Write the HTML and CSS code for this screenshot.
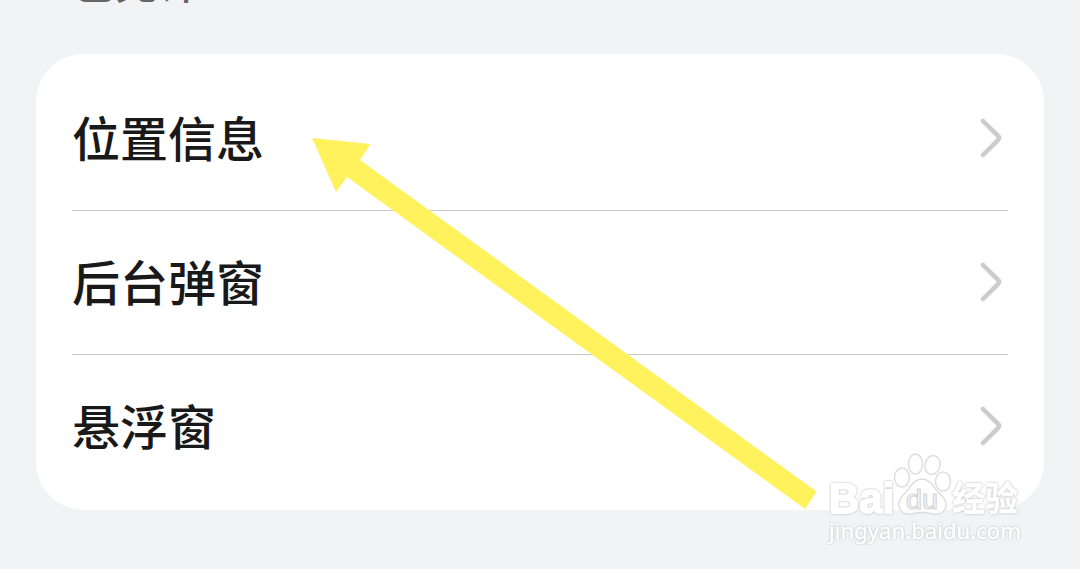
FILE: index.html
```html
<!DOCTYPE html>
<html lang="zh-CN">
<head>
    <meta charset="UTF-8">
    <meta name="viewport" content="width=device-width, initial-scale=1.0">
    <title>权限</title>
    <link rel="stylesheet" href="styles.css">
</head>
<body>

    <h2 class="section-title">已允许</h2>

    <div class="card">
        <div class="row">
            <span>位置信息</span>
            <svg class="chevron" width="24" height="40" viewBox="0 0 24 40"><path d="M3 3L18 17.800Q20 20 18 22.200L3 37"/></svg>
        </div>
        <div class="row">
            <span>后台弹窗</span>
            <svg class="chevron" width="24" height="40" viewBox="0 0 24 40"><path d="M3 3L18 17.800Q20 20 18 22.200L3 37"/></svg>
        </div>
        <div class="row">
            <span>悬浮窗</span>
            <svg class="chevron" width="24" height="40" viewBox="0 0 24 40"><path d="M3 3L18 17.800Q20 20 18 22.200L3 37"/></svg>
        </div>
    </div>

    <svg class="arrow" width="506" height="372" viewBox="0 0 506 372">
        <path d="M0 0L58.500 6L48 22L504.500 353.500L493 371L35 39L24 54Z"/>
    </svg>

    <svg class="watermark" width="210" height="100" viewBox="0 0 210 100">
        <g class="paw">
            <ellipse cx="82" cy="32.500" rx="7.500" ry="9.500"/>
            <ellipse cx="95.500" cy="19" rx="7" ry="10"/>
            <ellipse cx="112.500" cy="20" rx="7.500" ry="9.500" transform="rotate(12 112.500 20)"/>
            <ellipse cx="123" cy="36.500" rx="7.500" ry="9.500"/>
            <path d="M102 34C94 34 91 41 87 46C82 51 78 55 79 61C80 68 86 70 92 69C99 67 105 67 112 69C119 70 125 68 126 61C127 55 122 51 117 46C113 41 110 34 102 34Z"/>
        </g>
        <g class="logo">
            <text x="9" y="67.500" font-size="42" textLength="65" lengthAdjust="spacingAndGlyphs">Bai</text>
            <text class="du" x="86" y="64" font-size="27" textLength="32" lengthAdjust="spacingAndGlyphs">du</text>
            <text class="cn" x="132" y="66" font-size="34" textLength="66" lengthAdjust="spacingAndGlyphs">经验</text>
        </g>
        <text class="url" x="9" y="94" font-size="22" textLength="192" lengthAdjust="spacingAndGlyphs">jingyan.baidu.com</text>
    </svg>

</body>
</html>
```
FILE: styles.css
```css
* {
    box-sizing: border-box;
}

body {
    position: relative;
    margin: 0;
    height: 569px;
    overflow: hidden;
    background-color: #f1f3f5;
    color: #191919;
    font-family: "Noto Sans CJK SC", sans-serif;
}

.section-title {
    height: 54px;
    margin: -49px 0 49px;
    padding-left: 73px;
    font-size: 42px;
    font-weight: 500;
    line-height: 60px;
    letter-spacing: 0.5px;
    color: #666;
}

.card {
    margin: 0 36px;
    padding: 12px 36px;
    height: 456px;
    background-color: #fff;
    border-radius: 48px;
}

.row {
    display: flex;
    justify-content: space-between;
    align-items: center;
    height: 144px;
    padding-right: 4px;
    font-size: 48px;
    font-weight: 500;
    line-height: 72px;
}

.row span {
    padding-bottom: 5px;
}

.row + .row {
    border-top: 1px solid #c8c9ca;
}

.row + .row .chevron {
    margin-top: -1px;
}

.chevron path {
    fill: none;
    stroke: #ccc;
    stroke-width: 4.5;
    stroke-linecap: round;
}

/* pointer drawn over the list */
.arrow {
    position: absolute;
    left: 312px;
    top: 138px;
    fill: #fff25c;
}

.watermark {
    position: absolute;
    left: 820px;
    top: 445px;
}

.paw {
    fill: rgba(255, 255, 255, 0.8);
    stroke: #dedede;
    stroke-width: 1.5;
}

.logo text {
    font-family: "Liberation Sans", sans-serif;
    font-weight: bold;
    fill: #fff;
    stroke: #fff;
    stroke-width: 2;
    filter: drop-shadow(0 0 1px #b5b5b5);
}

.logo .du {
    font-weight: normal;
    stroke: #d5d5d5;
    stroke-width: 1.2;
    filter: none;
}

.logo .cn {
    font-family: "Noto Sans CJK SC", sans-serif;
    stroke-width: 0.5;
}

.url {
    font-family: "Noto Sans", sans-serif;
    font-weight: 400;
    fill: #fff;
    stroke: #fff;
    stroke-width: 0.4;
    filter: drop-shadow(0 0 1px #b8b8b8);
}
```
